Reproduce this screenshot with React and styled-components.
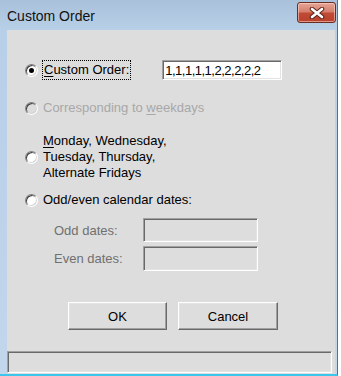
import React from "react";
import styled, { createGlobalStyle } from "styled-components";

const Global = createGlobalStyle`
  html, body { margin: 0; padding: 0; background: #ffffff; }
  body { width: 341px; height: 376px; overflow: hidden; }
  * { box-sizing: border-box; }
`;

const Window = styled.div`
  width: 338px;
  height: 376px;
  display: flex;
  flex-direction: column;
  background: linear-gradient(#a9c0da 0px, #b8cfe8 30px, #c2d6ec 100%);
  border-right: 1px solid #5f6f80;
  border-bottom: 2px solid #3cc6ec;
  font-family: "Liberation Sans", Arial, sans-serif;
`;

const TitleBar = styled.div`
  height: 30px;
  flex: none;
  display: flex;
  align-items: center;
  justify-content: space-between;
  padding: 0 1px 0 7px;
`;

const Title = styled.span`
  font-size: 14px;
  color: #111;
  margin-top: 1px;
`;

const CloseButton = styled.div`
  width: 39px;
  height: 21px;
  margin-bottom: 5px;
  border: 1px solid #6b2c24;
  border-radius: 3px;
  background: linear-gradient(#e6a596 0%, #d6806e 45%, #c04a35 55%, #b9412d 100%);
  box-shadow: inset 0 0 0 1px rgba(255, 220, 210, 0.55);
  display: flex;
  align-items: center;
  justify-content: center;
`;

const Client = styled.div`
  flex: 1;
  margin-left: 7px;
  margin-right: 2px;
  background: #dddddd;
  display: flex;
  flex-direction: column;
  padding-top: 30px;
  font-size: 13px;
  color: #000;
`;

const OptionRow = styled.div`
  display: flex;
  align-items: center;
  padding-left: 18px;
  height: ${(p) => p.$h}px;
  margin-top: ${(p) => p.$mt}px;
`;

const Radio = styled.span`
  width: 13px;
  height: 13px;
  flex: none;
  border-radius: 50%;
  border: 1px solid;
  border-color: #808080 #ffffff #ffffff #808080;
  box-shadow: inset 1px 1px 0 #404040, inset -1px -1px 0 #d4d4d4;
  background: ${(p) => (p.$disabled ? "#dddddd" : "#ffffff")};
  display: flex;
  align-items: center;
  justify-content: center;
  margin-right: 5px;
  &::after {
    content: "";
    width: 5px;
    height: 5px;
    border-radius: 50%;
    background: ${(p) => (p.$checked ? "#000" : "transparent")};
  }
`;

const Label = styled.span`
  color: ${(p) => (p.$disabled ? "#a8a8a8" : "#000")};
  white-space: nowrap;
  line-height: 16px;
  padding: ${(p) => (p.$focus ? "1px 1px" : "0")};
  border: ${(p) => (p.$focus ? "1px dotted #000" : "none")};
`;

const FocusLabel = styled(Label)`
  height: 20px;
  display: flex;
  align-items: center;
  margin-left: -1px;
`;

const MultiLabel = styled.div`
  line-height: 16px;
  color: #000;
`;

const U = styled.span`
  text-decoration: underline;
  text-underline-offset: 2px;
`;

const TextBox = styled.div`
  width: ${(p) => p.$w}px;
  height: ${(p) => p.$h}px;
  margin-left: ${(p) => p.$ml || 0}px;
  background: ${(p) => (p.$disabled ? "#dddddd" : "#ffffff")};
  border: 1px solid;
  border-color: #a0a0a0 #ffffff #ffffff #a0a0a0;
  box-shadow: inset 1px 1px 0 #696969, inset -1px -1px 0 #e3e3e3;
  padding: 0 2px;
  display: flex;
  align-items: center;
  color: #000;
  font-size: 13px;
  letter-spacing: -0.5px;
`;

const FieldRow = styled.div`
  display: flex;
  align-items: center;
  padding-left: 47px;
  margin-top: ${(p) => p.$mt}px;
`;

const FieldLabel = styled.span`
  width: 89px;
  color: #707070;
`;

const ButtonRow = styled.div`
  display: flex;
  gap: 11px;
  padding-left: 61px;
  margin-top: 31px;
`;

const Button = styled.div`
  width: ${(p) => p.$w}px;
  height: 28px;
  background: #dddddd;
  border: 1px solid;
  border-color: #ffffff #696969 #696969 #ffffff;
  box-shadow: inset -1px -1px 0 #a0a0a0, inset 1px 1px 0 #e3e3e3;
  display: flex;
  align-items: center;
  justify-content: center;
  color: #000;
`;

const StatusBar = styled.div`
  margin-top: 21px;
  width: 325px;
  height: 22px;
  border: 1px solid;
  border-color: #a0a0a0 #ffffff #ffffff #a0a0a0;
  box-shadow: inset 1px 1px 0 #696969, inset -1px -1px 0 #e3e3e3;
`;

const CloseIcon = () => (
  <svg width="16" height="12" viewBox="0 0 16 12">
    <path d="M3 2 L13 10 M13 2 L3 10" stroke="#5a2018" strokeWidth="4.5" strokeLinecap="round" />
    <path d="M3 2 L13 10 M13 2 L3 10" stroke="#ffffff" strokeWidth="2.6" strokeLinecap="round" />
  </svg>
);

export default function App() {
  return (
    <>
      <Global />
      <Window>
        <TitleBar>
          <Title>Custom Order</Title>
          <CloseButton>
            <CloseIcon />
          </CloseButton>
        </TitleBar>
        <Client>
          <OptionRow $h={20} $mt={0}>
            <Radio $checked />
            <FocusLabel $focus>
              <span>
                <U>C</U>ustom Order:
              </span>
            </FocusLabel>
            <TextBox $w={120} $h={20} $ml={31}>
              1,1,1,1,1,2,2,2,2,2
            </TextBox>
          </OptionRow>
          <OptionRow $h={16} $mt={20}>
            <Radio $disabled />
            <Label $disabled>
              Corresponding to <U>w</U>eekdays
            </Label>
          </OptionRow>
          <OptionRow $h={48} $mt={17}>
            <Radio />
            <MultiLabel>
              <U>M</U>onday, Wednesday,
              <br />
              Tuesday, Thursday,
              <br />
              Alternate Fridays
            </MultiLabel>
          </OptionRow>
          <OptionRow $h={16} $mt={11}>
            <Radio />
            <Label>Odd/even calendar dates:</Label>
          </OptionRow>
          <FieldRow $mt={10}>
            <FieldLabel>Odd dates:</FieldLabel>
            <TextBox $w={115} $h={24} $disabled />
          </FieldRow>
          <FieldRow $mt={4}>
            <FieldLabel>Even dates:</FieldLabel>
            <TextBox $w={115} $h={25} $disabled />
          </FieldRow>
          <ButtonRow>
            <Button $w={99}>OK</Button>
            <Button $w={100}>Cancel</Button>
          </ButtonRow>
          <StatusBar />
        </Client>
      </Window>
    </>
  );
}
